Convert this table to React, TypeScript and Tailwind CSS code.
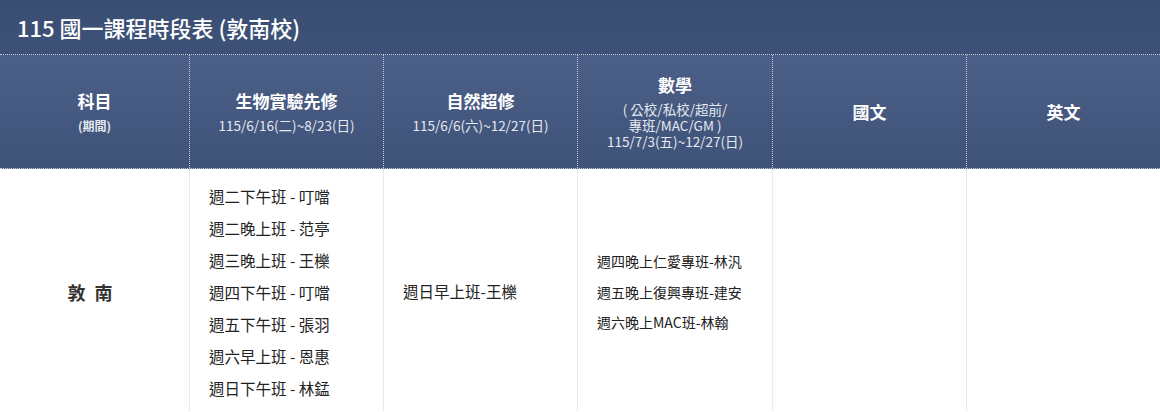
import React from "react";

const font = { fontFamily: '"Noto Sans CJK TC", "Noto Sans", sans-serif' };

export default function App() {
  const bio = [
    "週二下午班 - 叮噹",
    "週二晚上班 - 范亭",
    "週三晚上班 - 王櫟",
    "週四下午班 - 叮噹",
    "週五下午班 - 張羽",
    "週六早上班 - 恩惠",
    "週日下午班 - 林錳",
  ];
  const math = ["週四晚上仁愛專班-林汎", "週五晚上復興專班-建安", "週六晚上MAC班-林翰"];
  const hcell =
    "flex flex-col items-center justify-center text-center text-white border-r border-dotted border-[#c6ccd6]";
  const bcell = "border-r border-dotted border-[#d6d6d6]";
  return (
    <div className="w-[1160px] h-[412px] overflow-hidden bg-white" style={font}>
      <div className="h-[54px] bg-gradient-to-b from-[#3a4d72] to-[#3e5278] flex items-center pl-[17px] text-white text-[22px] font-medium">
        115 國一課程時段表 (敦南校)
      </div>
      <div className="grid grid-cols-[190px_194px_194px_195px_194px_1fr] h-[115px] border-t border-b border-dotted border-[#c6ccd6] bg-gradient-to-b from-[#4b5f88] to-[#3f5379]">
        <div className={hcell}>
          <div className="text-[17px] font-bold leading-[22px]">科目</div>
          <div className="text-[12px] font-bold leading-[17px] mt-[5px] text-[#e4e8ef]">(期間)</div>
        </div>
        <div className={hcell}>
          <div className="text-[17px] font-bold leading-[22px]">生物實驗先修</div>
          <div className="text-[13.5px] leading-[17px] mt-[5px] text-[#e4e8ef]">115/6/16(二)~8/23(日)</div>
        </div>
        <div className={hcell}>
          <div className="text-[17px] font-bold leading-[22px]">自然超修</div>
          <div className="text-[13.5px] leading-[17px] mt-[5px] text-[#e4e8ef]">115/6/6(六)~12/27(日)</div>
        </div>
        <div className={hcell}>
          <div className="text-[17px] font-bold leading-[22px]">數學</div>
          <div className="text-[13.5px] leading-[16px] mt-[5px] text-[#e4e8ef] flex flex-col items-center">
            <span className="block">( 公校/私校/超前/</span>
            <span className="block">專班/MAC/GM )</span>
            <span className="block">115/7/3(五)~12/27(日)</span>
          </div>
        </div>
        <div className={hcell}>
          <div className="text-[17px] font-bold leading-[22px]">國文</div>
        </div>
        <div className={hcell + " border-r-0"}>
          <div className="text-[17px] font-bold leading-[22px]">英文</div>
        </div>
      </div>
      <div className="grid grid-cols-[190px_194px_194px_195px_194px_1fr] h-[246px] text-[#222]">
        <div className={bcell + " flex items-center justify-center text-[18px] font-bold tracking-[9px] text-[#333]"}>
          敦南
        </div>
        <div className={bcell + " flex flex-col justify-center pl-[19px] text-[15.5px]"}>
          {bio.map((t) => (
            <div key={t} className="leading-[32px]">
              {t}
            </div>
          ))}
        </div>
        <div className={bcell + " flex items-center pl-[19px] text-[15.5px]"}>週日早上班-王櫟</div>
        <div className={bcell + " flex flex-col justify-center pl-[19px] text-[14px]"}>
          {math.map((t) => (
            <div key={t} className="leading-[30.5px]">
              {t}
            </div>
          ))}
        </div>
        <div className={bcell}></div>
        <div></div>
      </div>
    </div>
  );
}
